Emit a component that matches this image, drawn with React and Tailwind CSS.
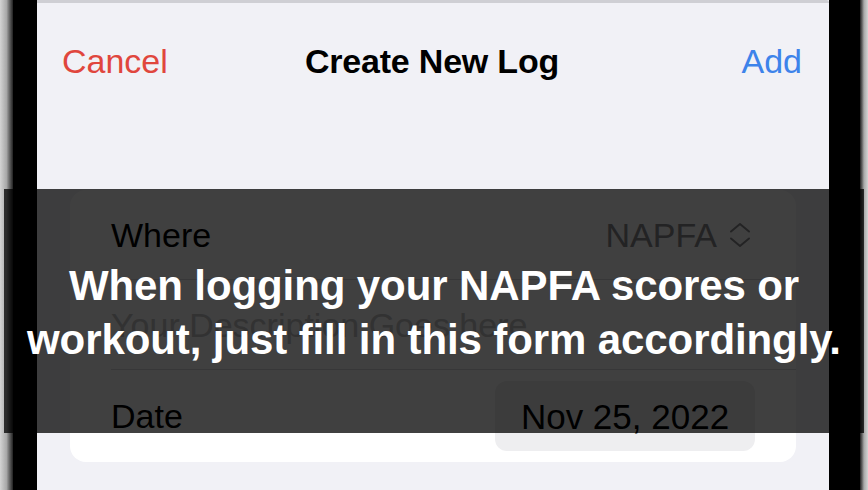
function FormRow({ children, divider }) {

  return (

    <div className="h-[90px] flex items-center pl-[41px]">

      <div className={`h-full flex-1 flex items-center justify-between pr-[45px] ${divider ? "border-b border-[#d9d9dd]" : ""}`}>

        {children}

      </div>

    </div>

  )
}

function UpDown() {

  return (

    <svg width="22" height="28" viewBox="0 0 22 28" fill="none" stroke="currentColor" strokeWidth="2" strokeLinecap="round" strokeLinejoin="round">

      <path d="M2 10.5 L11 3 L20 10.5" />
      <path d="M2 17.5 L11 25 L20 17.5" />

    </svg>

  )
}

export default function App() {

  return (

    <div
      className="w-[868px] h-[490px] relative overflow-hidden flex bg-black"
      style={{ fontFamily: '"Liberation Sans", Arial, sans-serif' }}
    >

      {/* phone side, left */}
      <div className="w-[13px] h-full bg-gradient-to-r from-[#d4d4d4] via-[#a8a8a8] to-[#222]"></div>
      <div className="w-[24px] h-full bg-black"></div>

      {/* SHEET */}
      <div className="w-[792px] h-full flex flex-col bg-[#f1f1f6]">

        <div className="h-[3px] bg-[#cfcfd4] rounded-tr-[6px]"></div>

        <div className="grid grid-cols-[1fr_auto_1fr] items-center pl-[25px] pr-[27px] mt-[41px] text-[34px] leading-none">

          <button className="text-[#e0463d] justify-self-start">Cancel</button>

          <h1 className="font-bold text-black tracking-[-0.2px]">Create New Log</h1>

          <button className="text-[#3d83ea] justify-self-end">Add</button>

        </div>

        <div className="mx-[33px] mt-[112px] bg-white rounded-[16px] text-[34px] leading-none">

          <FormRow divider>

            <span className="text-black">Where</span>

            <span className="flex items-center gap-[12px] text-[#8a8a8e]">

              NAPFA

              <UpDown />

            </span>

          </FormRow>

          <FormRow divider>

            <span className="text-[#c5c5c8]">Your Description Goes here</span>

          </FormRow>

          <div className="h-[92px] flex items-center justify-between pl-[41px] pr-[41px]">

            <span className="text-black">Date</span>

            <span className="w-[260px] h-[70px] rounded-[12px] bg-[#eeeef0] flex items-center justify-center text-black text-[35px]">

              Nov 25, 2022

            </span>

          </div>

        </div>

      </div>

      {/* phone side, right */}
      <div className="w-[31px] h-full bg-black"></div>
      <div className="flex-1 h-full bg-gradient-to-r from-[#222] via-[#a8a8a8] to-[#d4d4d4]"></div>

      {/* CAPTION */}
      <div className="absolute left-[4px] right-[4px] top-[189px] h-[244px] bg-black/75 flex items-center justify-center pt-[4px]">

        <p className="text-white font-bold text-[42px] leading-[54px] text-center whitespace-nowrap tracking-[-0.1px]">

          When logging your NAPFA scores or<br />
          workout, just fill in this form accordingly.

        </p>

      </div>

    </div>

  )
}
